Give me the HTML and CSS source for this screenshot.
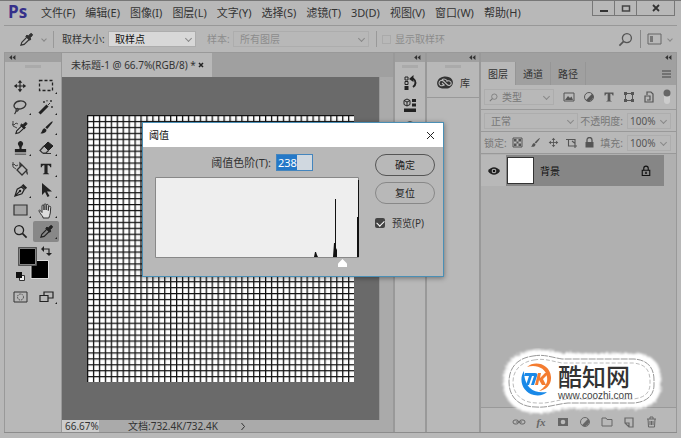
FILE: index.html
```html
<!DOCTYPE html>
<html lang="zh-CN">
<head>
  <meta charset="UTF-8">
  <meta name="viewport" content="width=device-width, initial-scale=1.0">
  <title>未标题-1 @ 66.7%(RGB/8)</title>
  <link rel="stylesheet" href="styles.css">
</head>
<body>
  <!-- shared icons -->
  <svg class="defs" width="0" height="0">
    <symbol id="move" viewBox="0 0 16 16"><path d="M8 3v10M3 8h10" stroke="currentColor" stroke-width="1.3"/><path d="M8 1l2.6 3.4H5.400zM8 15l2.600-3.400H5.400zM1 8l3.400-2.600v5.200zM15 8l-3.400-2.600v5.200z" fill="currentColor"/></symbol>
    <symbol id="dropper" viewBox="0 0 16 16"><path d="M2 14l1-3 5.500-5.500 2.500 2.500L5.500 13.200z" fill="none" stroke="currentColor" stroke-width="1.200"/><path d="M7.200 4.500l1.300-1.200 1.400 1L12 2c1.200-1.200 3.300.7 2 2l-2.300 2.200 1 1.400-1.300 1.200z" fill="currentColor" stroke="currentColor"/></symbol>
    <symbol id="brush" viewBox="0 0 16 16"><path d="M14.500 1.500c.7.600-4 6.300-5.800 8L6.800 8C8.500 6 13.800 1 14.500 1.500zM6 8.700l2 1.800c.2 3-3 4.400-6.500 3.500 2-.7 1.500-4.800 4.500-5.300z" fill="currentColor"/></symbol>
    <symbol id="type" viewBox="0 0 16 16"><path d="M2 2h12v4h-1.200c-.3-1.800-1-2.400-3-2.400V12c0 1 .5 1.200 1.700 1.300V14h-7v-.7c1.200-.1 1.700-.3 1.700-1.300V3.600c-2 0-2.700.6-3 2.400H2z" fill="currentColor"/></symbol>
    <symbol id="search" viewBox="0 0 16 16"><circle cx="9.500" cy="6.500" r="4.800" fill="none" stroke="currentColor" stroke-width="1.400"/><path d="M6 10l-4.500 4.500" stroke="currentColor" stroke-width="1.800"/></symbol>
    <symbol id="lock" viewBox="0 0 16 16"><path d="M5 7V4.500a3 3 0 016 0V7" fill="none" stroke="currentColor" stroke-width="1.500"/><path d="M3 7h10v7H3z" fill="none" stroke="currentColor" stroke-width="1.500"/><path d="M8 9v3" stroke="currentColor" stroke-width="2"/></symbol>
    <symbol id="half" viewBox="0 0 16 16"><circle cx="8" cy="8" r="6" fill="none" stroke="currentColor" stroke-width="1.300"/><path d="M12.200 3.800A6 6 0 013.800 12.200z" fill="currentColor"/></symbol>
    <symbol id="collapse" viewBox="0 0 8 6"><path d="M3.500 0v6L0 3zM7.500 0v6L4 3z" fill="currentColor"/></symbol>
  </svg>

  <header class="menubar">
    <strong class="logo">Ps</strong>
    <nav class="menu">
      <a href="#">文件(F)</a>
      <a href="#">编辑(E)</a>
      <a href="#">图像(I)</a>
      <a href="#">图层(L)</a>
      <a href="#">文字(Y)</a>
      <a href="#">选择(S)</a>
      <a href="#">滤镜(T)</a>
      <a href="#">3D(D)</a>
      <a href="#">视图(V)</a>
      <a href="#">窗口(W)</a>
      <a href="#">帮助(H)</a>
    </nav>
    <div class="winbuttons">
      <button aria-label="最小化"><svg width="10" height="10" viewBox="0 0 10 10"><path d="M1 8h8" stroke="#333" stroke-width="2"/></svg></button>
      <button aria-label="最大化"><svg width="10" height="10" viewBox="0 0 10 10"><path d="M1.500 3h7v5h-7z" fill="none" stroke="#444" stroke-width="1.500"/></svg></button>
      <button class="close" aria-label="关闭"><svg width="10" height="10" viewBox="0 0 10 10"><path d="M2 2l6 6M8 2L2 8" stroke="#333" stroke-width="1.800"/></svg></button>
    </div>
  </header>

  <section class="options">
    <button class="current" aria-label="吸管工具"><svg width="15" height="15"><use href="#dropper"/></svg><i class="chev"></i></button>
    <div class="sample">
      <label for="size">取样大小:</label>
      <span class="drop light"><select id="size"><option>取样点</option></select></span>
    </div>
    <div class="from">
      <label for="from">样本:</label>
      <span class="drop wide"><select id="from" disabled><option>所有图层</option></select></span>
    </div>
    <label class="ring"><input type="checkbox" disabled>显示取样环</label>
    <button class="find" aria-label="搜索"><svg width="15" height="15"><use href="#search"/></svg></button>
    <button class="workspace" aria-label="工作区"><svg width="15" height="12" viewBox="0 0 15 12"><path d="M1 1h13v10H1z" fill="none" stroke="#666"/><path d="M3 3h3v6H3z" fill="#777"/></svg><i class="chev"></i></button>
  </section>

  <main class="work">
    <aside class="toolbox">
      <div class="strip"><svg width="7" height="5"><use href="#collapse"/></svg></div>
      <div class="grip"></div>
      <div class="tools">
        <button aria-label="移动"><svg width="14" height="14"><use href="#move"/></svg></button>
        <button class="more" aria-label="选框"><svg width="16" height="14" viewBox="0 0 16 14"><path d="M1.500 1.500h13v10h-13z" fill="none" stroke="#222" stroke-width="1.300" stroke-dasharray="3 2"/></svg></button>
        <button class="more" aria-label="套索"><svg width="16" height="16" viewBox="0 0 16 16"><path d="M4.500 10C-.5 7 3 2.500 8 2c5-.4 7.500 3 4.500 6-2 2-5.500 2.500-7 1.500-2 0-2 3 0 2.500 1.300-.5.500-2.500-.5-2M4 12c-.2 1.500-.5 2-1.500 3" fill="none" stroke="#333" stroke-width="1.300"/></svg></button>
        <button class="more" aria-label="魔棒"><svg width="16" height="16" viewBox="0 0 16 16"><path d="M1.500 14.500l8-8" stroke="#222" stroke-width="3"/><path d="M10 6l2-2M6 2v2M5 3h2M13 1v2M12 2h2M14 7v2M13 8h2M9 1v1.500" stroke="#333"/></svg></button>
        <button aria-label="颜色替换"><svg width="18" height="16" viewBox="0 0 18 16"><g transform="translate(3 1) scale(.9)"><use href="#dropper" width="16" height="16"/></g><path d="M1 4l2 1 2-2 2 1M2 1v5l4 2" fill="none" stroke="#444"/></svg></button>
        <button class="more" aria-label="画笔"><svg width="15" height="15"><use href="#brush"/></svg></button>
        <button class="more" aria-label="图章"><svg width="15" height="15" viewBox="0 0 16 16"><path d="M5.800 4.500a2.700 2.700 0 114.400 0C9 6.500 9 7 9.200 8.500H14v3.500H2V8.500h4.800C7 7 7 6.500 5.800 4.500zM2 13.500h12v1H2z" fill="#222"/></svg></button>
        <button class="more" aria-label="橡皮擦"><svg width="16" height="15" viewBox="0 0 16 15"><path d="M6 5l4-4 5 4-4.500 4.500z" fill="#222" stroke="#222"/><path d="M6 5L2 9.500 4.500 12h3.500l2.500-2.500M5 12.500h8" fill="none" stroke="#333" stroke-width="1.200"/></svg></button>
        <button aria-label="油漆桶"><svg width="18" height="16" viewBox="0 0 18 16"><path d="M6 9l5-5 5 5-5 5zM9 6V2l3 3" fill="none" stroke="#333" stroke-width="1.300"/><path d="M15 9c2 1 2 4 1.500 5-1.500-1-1-3-1.500-5z" fill="#222"/><path d="M1 4l2-1 2 2 2-1M2 1v5l3 2" fill="none" stroke="#444"/></svg></button>
        <button class="more" aria-label="文字"><svg width="14" height="14"><use href="#type"/></svg></button>
        <button class="more" aria-label="钢笔"><svg width="15" height="15" viewBox="0 0 16 16"><path d="M2 14L4.500 6.500 9 4l3 3-2.500 4.500zM2 14l5-5" fill="none" stroke="#222" stroke-width="1.300"/><path d="M9 3l2-2 4 4-2 2z" fill="#222"/><circle cx="7.500" cy="8.500" r="1.300" fill="#222"/></svg></button>
        <button class="more" aria-label="路径选择"><svg width="14" height="15" viewBox="0 0 14 15"><path d="M3 0v12l3-3 2.500 5 2-1-2.500-4.500H13z" fill="#222"/></svg></button>
        <button class="more" aria-label="矩形"><svg width="15" height="13" viewBox="0 0 15 13"><path d="M1 1h13v10H1z" fill="#a5a5a5" stroke="#333" stroke-width="1.200"/></svg></button>
        <button class="more" aria-label="抓手"><svg width="16" height="16" viewBox="0 0 16 16"><path d="M5 14C3.500 12 1.500 9.500 1 8c-.2-1.300 1.300-1.500 2 .5l1 1V3c0-1.500 2-1.500 2 0v4-5c0-1.500 2.200-1.500 2.200 0v5-4.500c0-1.500 2.100-1.500 2.100 0V7.500l.4-3.500c.3-1.300 2.200-1 2 .4l-.4 5.600c-.2 2-1 3-1.500 5H5z" fill="#ddd" stroke="#333"/></svg></button>
        <button aria-label="缩放"><svg class="flip" width="15" height="15"><use href="#search"/></svg></button>
        <button class="more on" aria-label="吸管"><svg width="15" height="15"><use href="#dropper"/></svg></button>
      </div>
      <svg class="swatches" width="40" height="36" viewBox="0 0 40 36">
        <path d="M16 15.500h17.500v18H16z" fill="#000" stroke="#ddd"/>
        <path d="M3.500 2.500h18v18h-18z" fill="#000" stroke="#555"/><path d="M4.500 3.500h16v16h-16z" fill="#000" stroke="#e0e0e0" stroke-width=".6"/>
        <path d="M28 4h6v5" fill="none" stroke="#222" stroke-width="1.200"/><path d="M26 4l3-3v6zM34 11l-3-3h6z" fill="#222"/>
        <path d="M4.500 30.500h5v5h-5z" fill="#eee" stroke="#333"/><path d="M1 27h6v6H1z" fill="#111"/>
      </svg>
      <div class="modes">
        <button aria-label="快速蒙版"><svg width="15" height="12" viewBox="0 0 15 12"><path d="M1 1h13v10H1z" fill="none" stroke="#333"/><circle cx="7.500" cy="6" r="3" fill="none" stroke="#444" stroke-dasharray="1.500 1"/></svg></button>
        <button class="more" aria-label="屏幕模式"><svg width="15" height="12" viewBox="0 0 15 12"><path d="M5 1h9v6H5z" fill="none" stroke="#222" stroke-width="1.200"/><path d="M1 4.500h8v6H1z" fill="#b8b8b8" stroke="#222" stroke-width="1.200"/></svg></button>
      </div>
    </aside>

    <section class="document">
      <div class="doctabs"><div class="doctab">未标题-1 @ 66.7%(RGB/8) * <button aria-label="关闭文档"><svg width="6" height="6" viewBox="0 0 6 6"><path d="M1 1l4 4M5 1L1 5" stroke="#222" stroke-width="1.500"/></svg></button></div></div>
      <div class="stage">
        <div class="pasteboard">
          <svg class="art" viewBox="0 0 540 540">
            <defs><pattern id="cells" width="12" height="12" patternUnits="userSpaceOnUse"><path d="M0 0h12v12H0z" fill="#fff"/><path d="M0 1.300h12M1.300 0v12" stroke="#111" stroke-width="2.600"/></pattern></defs>
            <path d="M0 0h540v540H0z" fill="url(#cells)"/>
          </svg>
        </div>
        <div class="scroll"></div>
      </div>
      <footer class="status">
        <span class="zoom">66.67%</span>
        <span class="info">文档:732.4K/732.4K</span>
        <svg width="6" height="9" viewBox="0 0 6 9"><path d="M1.500 1l3 3.500-3 3.500" fill="none" stroke="#333"/></svg>
      </footer>
    </section>

    <aside class="dock narrow">
      <div class="strip right"><svg width="7" height="5"><use href="#collapse"/></svg></div>
      <div class="grip"></div>
      <button aria-label="历史记录"><svg width="14" height="16" viewBox="0 0 14 16"><path d="M2 2h3v3H2zM2 6.500h3v3H2z" fill="none" stroke="#222"/><path d="M1.500 11h4v4h-4z" fill="#222"/><path d="M8 4h2.500c3 2 2.500 6-.5 8" fill="none" stroke="#222" stroke-width="2"/><path d="M10.500 0v7L6 4z" fill="#222"/></svg></button>
      <button aria-label="属性"><svg width="14" height="15" viewBox="0 0 14 15"><path d="M4 1l3 1.500v4L4 8 1 6.500v-4zM1 2.500L4 4l3-1.500M4 4v4" fill="none" stroke="#222"/><path d="M9 1h4v3H9zM9 5.500h4v3H9zM1 10.500h12v3.500H1z" fill="#222"/></svg></button>
      <button aria-label="颜色"><svg width="14" height="14" viewBox="0 0 14 14"><circle cx="7" cy="7" r="5" fill="none" stroke="#333" stroke-width="1.500"/></svg></button>
    </aside>

    <aside class="dock library">
      <div class="strip center"><svg width="7" height="5"><use href="#collapse"/></svg></div>
      <div class="grip"></div>
      <button class="lib"><svg width="18" height="14" viewBox="0 0 18 14"><path d="M5.500 1.200C8 0 14 0 16 3.500c2.500 4-.5 8-4.500 9H6C-.5 11.500-.5 3.500 5.500 1.200z" fill="#333"/><path d="M8.500 8.500C6 11 3 9.500 3 7.200 3 4.500 6 3.500 8 5.500l3 3c2 2 4.500.5 4.200-1.500C15 5 12.500 4 10.500 5.500M6 7l2.500 2.500M6 3.500c3-1.500 4 0 5.500 1.500" fill="none" stroke="#bbb" stroke-width="1.100"/></svg>库</button>
    </aside>

    <aside class="panel">
      <div class="strip end"><svg width="7" height="5"><use href="#collapse"/></svg></div>
      <div class="tabs">
        <button class="active">图层</button><button>通道</button><button>路径</button>
        <svg width="9" height="8" viewBox="0 0 9 8"><path d="M0 1h9M0 4h9M0 7h9" stroke="#444"/></svg>
      </div>
      <div class="row filter">
        <span class="drop kind"><svg width="9" height="9"><use href="#search"/></svg><select aria-label="类型"><option>类型</option></select></span>
        <span class="filters">
          <svg width="12" height="12" viewBox="0 0 12 12"><path d="M1 2h10v8H1z" fill="none" stroke="currentColor"/><path d="M2 9l3-4 2 2 1.500-1.500L10 9z" fill="currentColor"/></svg>
          <svg width="12" height="12"><use href="#half"/></svg>
          <svg width="12" height="12"><use href="#type"/></svg>
          <svg width="12" height="12" viewBox="0 0 12 12"><path d="M2.500 2.500h7v7h-7z" fill="none" stroke="currentColor"/><path d="M1 1h3v3H1zM8 1h3v3H8zM1 8h3v3H1zM8 8h3v3H8z" fill="currentColor"/></svg>
          <svg width="12" height="12" viewBox="0 0 12 12"><path d="M4 4V1h4l2 2v8H2V5h5v4H4" fill="none" stroke="currentColor" stroke-width="1.200"/></svg>
        </span>
        <svg class="toggle" width="8" height="16" viewBox="0 0 8 16"><path d="M1 4h6v8a3 3 0 01-6 0z" fill="#ccc"/><circle cx="4" cy="4" r="3.500" fill="#666"/></svg>
      </div>
      <div class="row">
        <span class="drop mode"><select aria-label="混合模式"><option>正常</option></select></span>
        <label for="opacity">不透明度:</label>
        <span class="drop amount"><input id="opacity" type="text" value="100%"></span>
      </div>
      <div class="row locks">
        <span>锁定:</span>
        <span class="lockicons">
          <svg width="11" height="11" viewBox="0 0 11 11"><path d="M1 1h9v9H1z" fill="none" stroke="currentColor"/><path d="M2 2h2.500v2.500H2zM6.500 2H9v2.500H6.500zM4.500 4.500h2v2h-2zM2 6.500h2.500V9H2zM6.500 6.500H9V9H6.500z" fill="currentColor"/></svg>
          <svg width="11" height="11"><use href="#brush"/></svg>
          <svg width="11" height="11"><use href="#move"/></svg>
          <svg width="11" height="11" viewBox="0 0 11 11"><path d="M0 2.500h9V11M2.500 2v7H11M6 4l2.500 2" fill="none" stroke="currentColor" stroke-width="1.100"/></svg>
          <svg width="11" height="11" viewBox="0 0 11 11"><path d="M3 5V3a2.500 2.500 0 015 0v2" fill="none" stroke="currentColor" stroke-width="1.300"/><path d="M1.500 5h8v5.500h-8z" fill="currentColor"/></svg>
        </span>
        <label for="fill">填充:</label>
        <span class="drop amount"><input id="fill" type="text" value="100%"></span>
      </div>
      <div class="layers">
        <div class="layer">
          <span class="eye"><svg width="12" height="8" viewBox="0 0 12 8"><path d="M0 4c3-5 9-5 12 0-3 5-9 5-12 0z" fill="#222"/><circle cx="6" cy="4" r="2.300" fill="#bbb"/><circle cx="6" cy="4" r="1.300" fill="#111"/></svg></span>
          <div class="name"><span class="thumb"></span>背景<svg width="12" height="12"><use href="#lock"/></svg></div>
        </div>
      </div>
      <div class="actions">
        <button aria-label="链接"><svg width="14" height="12" viewBox="0 0 14 12"><rect x="1" y="4" width="5.500" height="4" rx="2" fill="none" stroke="currentColor"/><rect x="7.500" y="4" width="5.500" height="4" rx="2" fill="none" stroke="currentColor"/><path d="M4 6h6" stroke="currentColor"/></svg></button>
        <button class="fx" aria-label="图层样式">fx</button>
        <button aria-label="蒙版"><svg width="12" height="10" viewBox="0 0 12 10"><path d="M1 1h10v8H1z" fill="currentColor"/><circle cx="6" cy="5" r="2.300" fill="#bbb"/></svg></button>
        <button aria-label="调整图层"><svg width="12" height="12"><use href="#half"/></svg></button>
        <button aria-label="新建组"><svg width="12" height="10" viewBox="0 0 12 10"><path d="M1 9V1h4l1 1.500h5V9z" fill="none" stroke="currentColor"/></svg></button>
        <button aria-label="新建图层"><svg width="12" height="11" viewBox="0 0 12 11"><path d="M2 1h8v9H6L2 6zM2 6h4v4" fill="none" stroke="currentColor" stroke-width="1.200"/></svg></button>
        <button aria-label="删除"><svg width="11" height="12" viewBox="0 0 11 12"><path d="M1 3h9M4 3V1h3v2M2 3l.5 8h6L9 3M4 5v4M5.500 5v4M7 5v4" fill="none" stroke="currentColor"/></svg></button>
      </div>
    </aside>
  </main>

  <form class="dialog" role="dialog" aria-label="阈值">
    <div class="title">阈值<button type="button" aria-label="关闭"><svg width="9" height="9" viewBox="0 0 9 9"><path d="M1 1l7 7M8 1L1 8" stroke="#222"/></svg></button></div>
    <div class="content">
      <div class="levels">
        <div class="field"><label for="level">阈值色阶(T):</label><input id="level" type="text" value="238"></div>
        <svg class="histogram" viewBox="0 0 204 81" width="204" height="81">
          <path d="M.5.500h203v80H.5z" fill="#eee" stroke="#888"/>
          <path d="M159 80l1-5h1l1 3 1 2zM178 80l1-14h1V22h1v49l1 2v7zM202 80V40h1V3h1v77z" fill="#111"/>
        </svg>
        <div class="track"><svg class="handle" width="9" height="8" viewBox="0 0 9 8"><path d="M4.500 0L9 4.500V8H0V4.500z" fill="#fff"/></svg></div>
      </div>
      <div class="side">
        <button type="button" class="ok">确定</button>
        <button type="button">复位</button>
        <label class="preview"><input type="checkbox" checked>预览(P)</label>
      </div>
    </div>
  </form>

  <div class="stamp">
    <svg class="edge" viewBox="0 0 166 68" width="166" height="68">
      <defs><filter id="rough" x="-10%" y="-10%" width="120%" height="120%"><feTurbulence type="fractalNoise" baseFrequency=".6" numOctaves="2" result="n"/><feDisplacementMap in="SourceGraphic" in2="n" scale="6"/><feGaussianBlur stdDeviation=".9"/></filter></defs>
      <path d="M33 5C44 3 50 6 62 8h74c17 1 22 12 22 24v6c0 11-8 19-23 20H68c-12 1-20 5-32 4C17 62 6 51 6 34S16 7 33 5z" fill="#fff" stroke="#fff" stroke-width="6" filter="url(#rough)"/>
      <path d="M33 8C44 6 50 9 62 11h72c14 1 20 9 20 21v5c0 10-7 17-20 18H68c-12 1-20 5-32 4C19 59 9 49 9 34S18 10 33 8z" fill="none" stroke="#999" stroke-dasharray="7 1"/>
      <path d="M34 12c10-2 17 1 28 3h71c12 1 17 7 17 18v3c0 9-6 14-17 15H68c-12 1-20 5-31 4-15 0-24-9-24-21s8-20 21-22z" fill="#fff" stroke="#bbb" stroke-dasharray="4 2"/>
    </svg>
    <div class="brand">
      <svg width="32" height="34" viewBox="0 0 32 34"><path d="M7 5C15-2 30 2 31 15c.5 8-5 13-12 14 6-4 9-8 8-14C26 6 16 2 7 5z" fill="#f47c30"/><path d="M4 9c-6 9-1 22 10 24 5 1 10 0 13-3-7 1-13 0-17-4-4-4-6-10-6-17z" fill="#1989e8"/><path d="M5 11h10c2 0 3 1 2 3l-3 9h-3l3-9h-2l-3 9H6l3-9H4z" fill="#1989e8"/><path d="M18 11h3l-1 5 5-5h4l-6 6 3 6h-4l-3-5-1 5h-3z" fill="#f47c30"/></svg>
      <div><b>酷知网</b><span>www.coozhi.com</span></div>
    </div>
  </div>
</body>
</html>
```

FILE: styles.css
```css
* {
  box-sizing: border-box;
}
body {
  margin: 0;
  height: 100vh;
  display: flex;
  flex-direction: column;
  position: relative;
  overflow: hidden;
  padding: 0 4px 5px;
  background: #b8b8b8;
  border-top: 1px solid #777;
  color: #333;
  font: 11px/16px "Noto Sans", "Noto Sans CJK SC", sans-serif;
}
.defs {
  position: absolute;
}
svg {
  display: block;
  flex: none;
}
button, input, select {
  font: inherit;
  color: inherit;
  margin: 0;
  padding: 0;
  border: 0;
  background: none;
}
button {
  display: flex;
  align-items: center;
  justify-content: center;
}
a {
  color: inherit;
  text-decoration: none;
}

/* menu bar */
.menubar {
  display: flex;
  height: 25px;
  flex: none;
  border-bottom: 1px solid #989898;
}
.logo {
  width: 37px;
  padding-left: 4px;
  font: bold 17px/22px "Open Sans", sans-serif;
  color: #35308a;
}
.menu {
  display: flex;
  gap: 10px;
  line-height: 24px;
  white-space: nowrap;
}
.winbuttons {
  display: flex;
  height: 15px;
  margin-left: auto;
  margin-right: 2px;
  border: 1px solid #777;
  border-top: 0;
}
.winbuttons button {
  width: 22px;
  border-right: 1px solid #777;
}
.winbuttons .close {
  width: 37px;
  border: 0;
}

/* options bar */
.options {
  display: flex;
  align-items: center;
  height: 27px;
  flex: none;
  border-bottom: 1px solid #999;
  white-space: nowrap;
  font-size: 10px;
}
.chev, .drop::after {
  content: "";
  width: 4px;
  height: 4px;
  border: solid #888;
  border-width: 0 1px 1px 0;
  transform: rotate(45deg);
}
.current {
  width: 50px;
  padding-left: 8px;
  gap: 8px;
  height: 17px;
  border-right: 1px solid #999;
}
.sample, .from {
  display: flex;
  align-items: center;
  justify-content: space-between;
  width: 134px;
  margin-left: 8px;
}
.from {
  width: 162px;
  margin-left: 11px;
  color: #8c8c8c;
}
.drop {
  position: relative;
  display: flex;
  align-items: center;
  height: 16px;
  border: 1px solid #adadad;
}
.drop::after {
  position: absolute;
  right: 4px;
  top: 4px;
}
.drop select {
  appearance: none;
  width: 100%;
  padding-left: 6px;
  opacity: 1;
}
.light {
  width: 88px;
  background: #d8d8d8;
  color: #111;
}
.wide {
  width: 136px;
}
.ring {
  display: flex;
  align-items: center;
  gap: 4px;
  height: 16px;
  margin-left: 7px;
  padding-left: 5px;
  border-left: 1px solid #999;
  color: #8c8c8c;
}
.ring input {
  appearance: none;
  width: 9px;
  height: 9px;
  border: 1px solid #aaa;
}
.find {
  margin-left: auto;
  padding-right: 7px;
  color: #555;
}
.workspace {
  width: 37px;
  height: 18px;
  padding-left: 6px;
  gap: 6px;
  justify-content: flex-start;
  border-left: 1px solid #888;
}

/* main columns */
.work {
  flex: 1;
  display: flex;
  min-height: 0;
  border-bottom: 1px solid #8c8c8c;
  font-size: 10px;
}
.strip {
  display: flex;
  align-items: center;
  height: 9px;
  flex: none;
  padding: 0 4px;
  background: #a0a0a0;
  color: #333;
}
.strip.right {
  justify-content: flex-end;
}
.strip.center {
  padding-left: 42px;
  padding-right: 0;
}
.strip.end {
  justify-content: flex-end;
}
.grip {
  width: 16px;
  height: 3px;
  margin: 3px auto 0;
  background: #aaa;
}
.toolbox {
  width: 58px;
  flex: none;
  border: solid #999;
  border-width: 0 1px;
}
.tools {
  display: grid;
  grid-template-columns: 26px 26px;
  grid-auto-rows: 1fr;
  justify-content: center;
  height: 166px;
  margin-top: 8px;
  color: #222;
}
.tools button, .modes button {
  position: relative;
}
.more::after {
  content: "";
  position: absolute;
  right: 2px;
  bottom: 3px;
  border: 1px solid #222;
  border-top-color: transparent;
  border-left-color: transparent;
}
.tools .on {
  background: #888;
  border-radius: 2px;
}
.flip {
  transform: scaleX(-1);
}
.swatches {
  margin: 3px auto 0 10px;
}
.modes {
  display: grid;
  grid-template-columns: 26px 26px;
  justify-content: center;
  height: 20px;
  margin-top: 6px;
}

/* document */
.document {
  flex: 1;
  min-width: 0;
  display: flex;
  flex-direction: column;
}
.doctabs {
  display: flex;
  height: 24px;
  flex: none;
  background: #a0a0a0;
}
.doctab {
  display: flex;
  align-items: center;
  justify-content: space-between;
  width: 150px;
  padding: 0 8px 0 9px;
  background: #b8b8b8;
  white-space: nowrap;
}
.stage {
  flex: 1;
  display: flex;
  min-height: 0;
}
.pasteboard {
  flex: 1;
  padding: 38px 0 0 25px;
  background: #6a6a6a;
}
.art {
  width: 267px;
  height: 267px;
}
.scroll {
  width: 14px;
  background: #aaa;
  border-left: 1px solid #999;
}
.status {
  display: flex;
  align-items: center;
  height: 12px;
  flex: none;
  background: #aaa;
  line-height: 12px;
}
.zoom {
  width: 37px;
  padding-left: 3px;
  background: #ccc;
}
.info {
  width: 112px;
  margin: 0 0 0 29px;
}

/* docked panels */
.dock {
  flex: none;
  border-left: 2px solid #999;
}
.narrow {
  width: 32px;
}
.narrow button {
  width: 100%;
  height: 22px;
}
.narrow .grip + button {
  margin-top: 4px;
}
.library {
  width: 54px;
}
.lib {
  width: 100%;
  height: 30px;
  gap: 6px;
  border-bottom: 1px solid #999;
}
.panel {
  width: 198px;
  flex: none;
  display: flex;
  flex-direction: column;
  border: solid #999;
  border-width: 0 1px 0 2px;
}
.tabs {
  display: flex;
  align-items: center;
  height: 23px;
  background: #a0a0a0;
  flex: none;
}
.tabs button {
  width: 35px;
  height: 23px;
  border-right: 1px solid #969696;
}
.tabs .active {
  background: #b8b8b8;
}
.tabs svg {
  margin-left: auto;
  margin-right: 5px;
}
.row {
  display: flex;
  align-items: center;
  height: 22px;
  flex: none;
  padding: 0 5px 0 3px;
  border-bottom: 1px solid #999;
  color: #777;
  white-space: nowrap;
}
.filter {
  height: 25px;
  color: #555;
}
.kind {
  width: 70px;
  padding-left: 4px;
  color: #777;
}
.kind select {
  padding-left: 4px;
}
.mode {
  width: 94px;
}
.row label {
  margin-left: auto;
}
.filters {
  display: flex;
  gap: 8px;
  margin-left: 9px;
}
.toggle {
  margin-left: auto;
}
.amount {
  width: 44px;
  margin-left: 4px;
}
.amount input {
  width: 30px;
  padding-left: 2px;
  color: #555;
}
.lockicons {
  display: flex;
  gap: 7px;
  margin-left: 5px;
  color: #555;
}
.layers {
  flex: 1;
  padding-top: 1px;
  background: #b0b0b0;
}
.layer {
  display: flex;
  height: 31px;
  margin-right: 12px;
}
.eye {
  width: 25px;
  display: flex;
  align-items: center;
  justify-content: center;
  background: #b8b8b8;
}
.name {
  flex: 1;
  display: flex;
  align-items: center;
  padding: 0 12px 0 1px;
  background: #868686;
  color: #111;
}
.name svg {
  margin-left: auto;
}
.thumb {
  width: 27px;
  height: 27px;
  margin-right: 6px;
  background: #fff;
  border: 1px solid #333;
}
.actions {
  display: flex;
  align-items: center;
  justify-content: center;
  height: 25px;
  padding: 4px 0 0 13px;
  flex: none;
  border-top: 1px solid #999;
  color: #666;
}
.actions button {
  width: 22px;
}
.actions .fx {
  font: italic bold 11px/12px "Liberation Serif", serif;
}

/* threshold dialog */
.dialog {
  position: absolute;
  left: 142px;
  top: 121px;
  width: 302px;
  background: #b8b8b8;
  border: 1px solid #4a8fb5;
  box-shadow: 0 1px 5px rgba(0,0,0,0.4);
}
.title {
  display: flex;
  align-items: center;
  justify-content: space-between;
  height: 24px;
  padding: 0 8px 0 6px;
  background: #fff;
  color: #111;
  font-size: 10px;
}
.content {
  display: flex;
  gap: 16px;
  height: 129px;
  padding: 7px 8px 0 12px;
}
.field {
  display: flex;
  align-items: center;
  justify-content: flex-end;
  gap: 5px;
  height: 17px;
  padding-right: 46px;
}
.field input {
  width: 37px;
  height: 17px;
  padding-left: 1px;
  border: 1px solid #4485bd;
  background: linear-gradient(to right, #2478c8 20px, #d0d8e0 20px);
  color: #fff;
}
.histogram {
  margin-top: 6px;
}
.track {
  padding: 1px 0 0 183px;
}
.side {
  flex: 1;
}
.side button {
  width: 100%;
  height: 22px;
  border: 1px solid #888;
  border-radius: 11px;
  color: #222;
  font-size: 10px;
  margin-bottom: 6px;
}
.side .ok {
  border-color: #555;
}
.preview {
  display: flex;
  align-items: center;
  gap: 7px;
  padding-top: 5px;
  white-space: nowrap;
  font-size: 10px;
}
.preview input {
  appearance: none;
  width: 10px;
  height: 10px;
  border-radius: 2px;
  background: #444;
  position: relative;
}
.preview input:checked::after {
  content: "";
  position: absolute;
  left: 3px;
  top: 1px;
  width: 4px;
  height: 6px;
  border: solid #fff;
  border-width: 0 1px 1px 0;
  transform: rotate(45deg);
}

/* site stamp */
.stamp {
  position: absolute;
  right: 15px;
  bottom: 22px;
  width: 166px;
  height: 68px;
}
.edge {
  position: absolute;
}
.brand {
  position: relative;
  display: flex;
  gap: 6px;
  padding: 14px 0 0 20px;
}
.brand b {
  display: block;
  font: 500 24px/27px "Noto Sans CJK SC", sans-serif;
  color: #333;
}
.brand span {
  display: block;
  font: 10px/14px "Liberation Sans", sans-serif;
  color: #444;
}
```
